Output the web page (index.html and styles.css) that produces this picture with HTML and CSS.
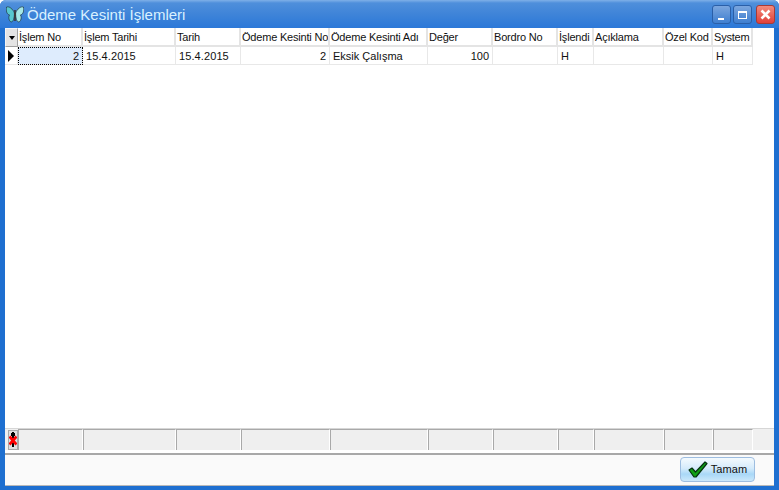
FILE: index.html
```html
<!DOCTYPE html>
<html lang="tr">
<head>
    <meta charset="UTF-8">
    <title>Ödeme Kesinti İşlemleri</title>
    <link rel="stylesheet" href="styles.css">
</head>
<body>
    <div class="window">
        <div class="titlebar">
            <svg class="app-icon" width="18" height="17" viewBox="0 0 18 17">
                <path d="M8.4 7 C7 3 3 0 .6 1 C-.4 5 1 8.5 3.6 9 C2 11 3 15 5 16 C7.4 16 8.4 12 8.4 7Z" fill="#58c8cf" stroke="#24404a" stroke-width=".8"/>
                <path d="M9.6 7 C11 3 15 0 17.4 1 C18.4 5 17 8.5 14.4 9 C16 11 15 15 13 16 C10.6 16 9.6 12 9.6 7Z" fill="#a6e8e6" stroke="#24404a" stroke-width=".8"/>
                <rect x="8.3" y="4" width="1.4" height="11" fill="#3b2a20"/>
            </svg>
            <span class="title">Ödeme Kesinti İşlemleri</span>
            <div class="win-buttons">
                <div class="win-btn"><span class="glyph-min"></span></div>
                <div class="win-btn"><span class="glyph-max"></span></div>
                <div class="win-btn close">
                    <svg width="11" height="11" viewBox="0 0 11 11"><path d="M1.5 1.5 L9.5 9.5 M9.5 1.5 L1.5 9.5" stroke="#fff" stroke-width="2.6"/></svg>
                </div>
            </div>
        </div>
        <div class="content">
            <div class="grid">
                <div class="row head">
                    <div class="cell indicator"><span class="sort-arrow"></span></div>
                    <div class="cell">İşlem No</div>
                    <div class="cell">İşlem Tarihi</div>
                    <div class="cell">Tarih</div>
                    <div class="cell">Ödeme Kesinti No</div>
                    <div class="cell">Ödeme Kesinti Adı</div>
                    <div class="cell">Değer</div>
                    <div class="cell">Bordro No</div>
                    <div class="cell">İşlendi</div>
                    <div class="cell">Açıklama</div>
                    <div class="cell">Özel Kod</div>
                    <div class="cell">System</div>
                </div>
                <div class="row data">
                    <div class="cell indicator"><span class="row-arrow"></span></div>
                    <div class="cell num focus">2</div>
                    <div class="cell date">15.4.2015</div>
                    <div class="cell date">15.4.2015</div>
                    <div class="cell num">2</div>
                    <div class="cell">Eksik Çalışma</div>
                    <div class="cell num">100</div>
                    <div class="cell"></div>
                    <div class="cell">H</div>
                    <div class="cell"></div>
                    <div class="cell"></div>
                    <div class="cell">H</div>
                </div>
                <div class="grid-space"></div>
                <div class="row foot">
                    <div class="cell indicator">
                        <svg width="8" height="18" viewBox="0 0 8 18">
                            <rect x="3" y="1" width="2" height="15" fill="#000"/>
                            <rect x="2" y="2" width="4" height="3" fill="#000"/>
                            <path d="M.5 5.5 L7.5 13.5 M7.5 5.5 L.5 13.5" stroke="#f00" stroke-width="2.8"/>
                        </svg>
                    </div>
                    <div class="cell"></div>
                    <div class="cell"></div>
                    <div class="cell"></div>
                    <div class="cell"></div>
                    <div class="cell"></div>
                    <div class="cell"></div>
                    <div class="cell"></div>
                    <div class="cell"></div>
                    <div class="cell"></div>
                    <div class="cell"></div>
                    <div class="cell"></div>
                </div>
            </div>
            <div class="bottom">
                <button class="ok-button">
                    <svg width="20" height="17" viewBox="0 0 20 17">
                        <path d="M1 9 L4 7 L7.5 11 L17 1 L19 2.5 L8 16 L6 16Z" fill="#0fa016" stroke="#06320f" stroke-width="1.2" stroke-linejoin="round"/>
                    </svg>
                    Tamam
                </button>
            </div>
        </div>
    </div>
</body>
</html>
```

FILE: styles.css
```css
html, body {
    margin: 0;
    height: 100%;
    overflow: hidden;
}
body {
    font-family: "Liberation Sans", Arial, sans-serif;
    font-size: 11px;
    color: #111;
}
.window {
    width: 779px;
    height: 490px;
    box-sizing: border-box;
    display: flex;
    flex-direction: column;
    padding: 0 4px 4px;
    background: #1e6fd0;
    border-radius: 6px 6px 0 0;
}
.titlebar {
    height: 28px;
    margin: 0 -4px;
    padding: 1px 4px 0 6px;
    box-sizing: border-box;
    display: flex;
    align-items: center;
    background: linear-gradient(to bottom, #7fb0e8 0, #4f8fdb 3px, #3f84d8 14px, #2b78d8 100%);
    border-radius: 6px 6px 0 0;
}
.app-icon {
    margin-right: 3px;
}
.title {
    font-size: 15px;
    color: #d9f1ff;
    flex: 1;
    white-space: nowrap;
}
.win-buttons {
    display: flex;
    gap: 2px;
}
.win-btn {
    width: 19px;
    height: 19px;
    box-sizing: border-box;
    border: 1px solid #2a5fa8;
    border-radius: 3px;
    background: linear-gradient(to bottom, #7ba6de, #3f7fd0);
    display: flex;
    align-items: center;
    justify-content: center;
}
.win-btn.close {
    margin-left: 2px;
    background: linear-gradient(to bottom, #f28b7d, #e0403a);
    border-color: #a83a36;
}
.glyph-min {
    width: 6px;
    height: 2px;
    background: #fff;
    margin-top: 8px;
    margin-right: 1px;
}
.glyph-max {
    width: 9px;
    height: 8px;
    box-sizing: border-box;
    border: 1px solid #fff;
    border-top-width: 2px;
}
.content {
    flex: 1;
    display: flex;
    flex-direction: column;
    background: #f0f0f0;
    margin: 0 1px;
}
.grid {
    flex: 1;
    display: flex;
    flex-direction: column;
    background: #fff;
}
.row {
    display: grid;
    grid-template-columns: 13px 65px 93px 65px 89px 98px 65px 65px 36px 70px 49px 40px;
}
.cell {
    box-sizing: border-box;
    padding: 0 2px;
    white-space: nowrap;
    overflow: hidden;
    border-right: 1px solid #e8e8e8;
    border-bottom: 1px solid #e8e8e8;
}
.head {
    height: 19px;
    line-height: 18px;
    letter-spacing: -.2px;
}
.head .cell {
    border-bottom: 2px solid #e4e4e4;
    border-right: 2px solid #e4e4e4;
    padding: 0 0 0 1px;
}
.head .indicator {
    background: #e4e4e4;
    border: 1px solid #a8a8a8;
    border-color: #f4f4f4 #a0a0a0 #a0a0a0 #f4f4f4;
    display: flex;
    align-items: center;
    justify-content: center;
    padding: 0;
}
.sort-arrow {
    border-left: 3px solid transparent;
    border-right: 3px solid transparent;
    border-top: 4px solid #000;
}
.data {
    height: 18px;
    line-height: 19px;
}
.data .cell {
    padding-left: 3px;
}
.data .date {
    letter-spacing: .1px;
}
.data .indicator {
    display: flex;
    align-items: center;
    padding: 0 0 0 3px;
}
.row-arrow {
    border-top: 6px solid transparent;
    border-bottom: 6px solid transparent;
    border-left: 6px solid #000;
}
.num {
    text-align: right;
}
.focus {
    background: #deecfd;
    outline: 1px dotted #000;
    outline-offset: -1px;
}
.data .num {
    padding-right: 3px;
}
.grid-space {
    flex: 1;
}
.foot {
    height: 25px;
    box-sizing: border-box;
    background: #f0f0f0;
    border-top: 1px solid #d6d6d6;
    border-bottom: 3px solid #fff;
}
.foot .cell {
    background: #efefef;
    border-left: 1px solid #a9a9a9;
    border-top: 1px solid #a9a9a9;
    border-right: 1px solid #fff;
    border-bottom: none;
}
.foot .indicator {
    margin-left: 3px;
    margin-top: 1px;
    width: 10px;
    padding: 0;
    border: 1px solid #a9a9a9;
    background: #e0e0e0;
    display: flex;
    align-items: center;
    justify-content: center;
}
.bottom {
    height: 33px;
    box-sizing: border-box;
    border-top: 2px solid #a8a8a8;
    border-bottom: 1px solid #b8b8b8;
    background: #fafafa;
    display: flex;
    align-items: center;
    justify-content: flex-end;
    padding: 0 19px 2px 0;
}
.ok-button {
    width: 75px;
    height: 25px;
    padding: 0;
    display: flex;
    align-items: center;
    justify-content: center;
    gap: 3px;
    font-family: "Liberation Sans", Arial, sans-serif;
    font-size: 11px;
    letter-spacing: .1px;
    color: #111;
    border: 1px solid #9dbde0;
    border-radius: 4px;
    background: linear-gradient(to bottom, #f4fafe 0, #d5ebfb 45%, #a9d8f7 70%, #cbe8fb 100%);
}
```
